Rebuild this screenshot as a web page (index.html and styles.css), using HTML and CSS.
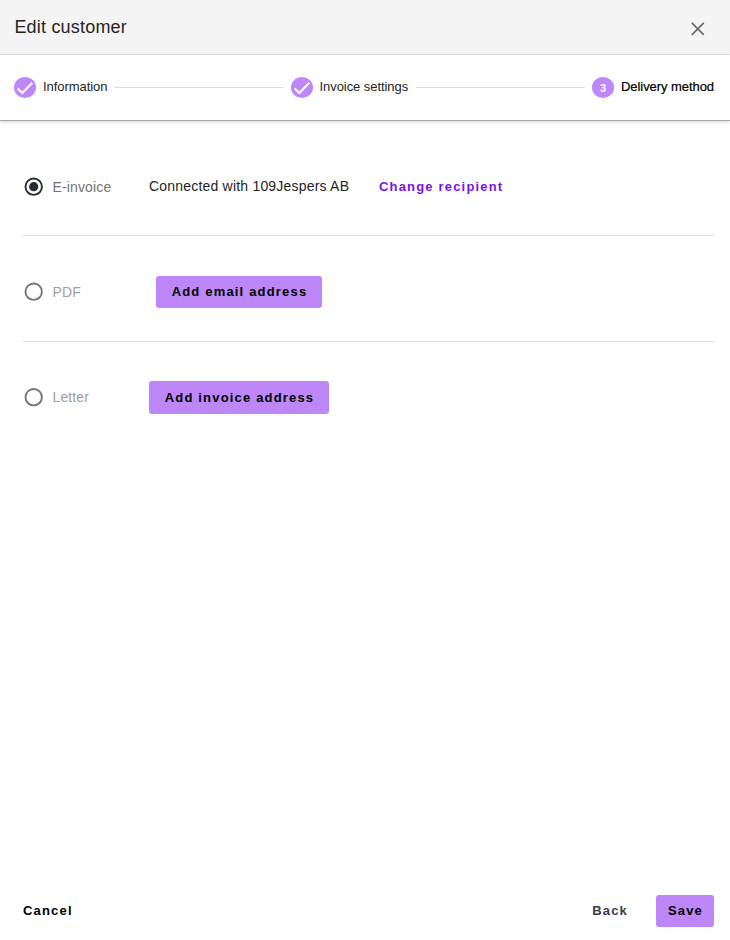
FILE: index.html
```html
<!DOCTYPE html>
<html lang="en">
<head>
<meta charset="utf-8">
<title>Edit customer</title>
<link rel="stylesheet" href="styles.css">
</head>
<body>
<div class="dialog">
  <header class="header">
    <h1 class="title">Edit customer</h1>
    <button class="close" aria-label="Close"><svg width="14" height="14" viewBox="0 0 14 14"><path d="M.8.8 12.8 12.8M12.8.8.8 12.8" fill="none" stroke="#6b6b6b" stroke-width="1.7"/></svg></button>
  </header>
  <nav class="stepper">
    <div class="step"><span class="badge"><svg width="22" height="22" viewBox="0 0 22 22"><path d="M3.7 11.5 8.3 16 18.3 5.8" fill="none" stroke="#fff" stroke-width="2"/></svg></span><span class="label label-info">Information</span></div>
    <span class="line"></span>
    <div class="step"><span class="badge"><svg width="22" height="22" viewBox="0 0 22 22"><path d="M3.7 11.5 8.3 16 18.3 5.8" fill="none" stroke="#fff" stroke-width="2"/></svg></span><span class="label label-settings">Invoice settings</span></div>
    <span class="line"></span>
    <div class="step"><span class="badge">3</span><span class="label label-delivery">Delivery method</span></div>
  </nav>
  <main class="options">
    <section class="option">
      <label class="choice checked"><svg class="radio" viewBox="0 0 20 20"><circle cx="9.7" cy="9.7" r="8.2"/><circle class="dot" cx="9.7" cy="9.7" r="4.6"/></svg><span>E-invoice</span></label>
      <span class="connected">Connected with 109Jespers AB</span>
      <button class="link change">Change recipient</button>
    </section>
    <section class="option">
      <label class="choice"><svg class="radio" viewBox="0 0 20 20"><circle cx="9.7" cy="9.7" r="8.2"/></svg><span>PDF</span></label>
      <button class="button email">Add email address</button>
    </section>
    <section class="option">
      <label class="choice letter"><svg class="radio" viewBox="0 0 20 20"><circle cx="9.7" cy="10.2" r="8.2"/></svg><span>Letter</span></label>
      <button class="button address">Add invoice address</button>
    </section>
  </main>
  <footer class="footer">
    <button class="link cancel">Cancel</button>
    <button class="link back">Back</button>
    <button class="button save">Save</button>
  </footer>
</div>
</body>
</html>
```
FILE: styles.css
```css
* { box-sizing: border-box; }
body {
  margin: 0;
  font-family: "Liberation Sans", Arial, sans-serif;
  background: #fff;
  color: #242424;
}
.dialog {
  width: 730px;
  height: 940px;
  display: flex;
  flex-direction: column;
  overflow: hidden;
}
.header {
  height: 55px;
  display: flex;
  justify-content: space-between;
  align-items: center;
  padding: 0 25px 0 14.4px;
  background: #f4f4f4;
  border-bottom: 1px solid #dedede;
}
.title { margin: 0; font-size: 18px; font-weight: 400; line-height: 20px; letter-spacing: 0.2px; white-space: nowrap; }
button { font-family: inherit; border: 0; padding: 0; background: none; white-space: nowrap; }
.close { display: flex; margin-top: 3px; }
.stepper {
  height: 66px;
  flex: none;
  display: flex;
  align-items: center;
  gap: 7px;
  padding: 0 16px 0 14px;
  border-bottom: 1px solid #a6a6a6;
  box-shadow: 0 1px 3px rgba(0, 0, 0, 0.16);
}
.step { display: flex; align-items: center; gap: 7px; }
.badge {
  width: 22px;
  height: 21px;
  border-radius: 50%;
  background: #bd87f8;
  color: #fff;
  font-size: 11px;
  font-weight: 700;
  display: flex;
  align-items: center;
  justify-content: center;
}
.label { font-size: 13px; line-height: 16px; letter-spacing: -0.06px; white-space: nowrap; padding-bottom: 1px; }
.label-info { width: 64px; }
.label-settings { width: 89px; }
.label-delivery { width: 93px; color: #000; -webkit-text-stroke: 0.2px #000; }
.line { flex: 1; height: 1px; background: #dedede; }
.options { flex: 1; padding: 16px 16px 0 23px; }
.option { height: 106px; display: flex; align-items: center; padding-top: 5px; }
.option:first-child { height: 99px; padding-top: 0; }
.option:nth-child(2) { padding-top: 7px; }
.option:not(:last-child) { border-bottom: 1px solid #dedede; }
.choice { width: 126px; display: flex; align-items: center; gap: 8.5px; padding-left: 1px; font-size: 14px; color: #a0a0a0; letter-spacing: 0.1px; }
.letter { padding-bottom: 1px; }
.checked { color: #747474; padding-top: 1px; letter-spacing: 0.14px; }
.radio { width: 20px; height: 20px; flex: none; fill: none; stroke: #757575; stroke-width: 1.9; }
.checked .radio { stroke: #292b34; }
.dot { fill: #292b34; stroke: none; }
.connected { width: 230px; font-size: 14px; letter-spacing: 0.2px; white-space: nowrap; }
.link, .button { font-size: 13px; font-weight: 700; letter-spacing: 1.18px; line-height: 16px; }
.button { height: 32px; border-radius: 3px; background: #bd87f8; color: #000; padding-left: 1px; }
.change { color: #7a12e6; padding-top: 1px; }
.email { width: 166px; margin-left: 7px; }
.address { width: 180px; height: 33px; }
.footer { height: 45px; display: flex; align-items: flex-start; padding: 0 16px 0 23px; }
.cancel { margin-top: 8px; }
.back { margin: 8px 28px 0 auto; color: #393b43; }
.save { width: 58px; }
```
